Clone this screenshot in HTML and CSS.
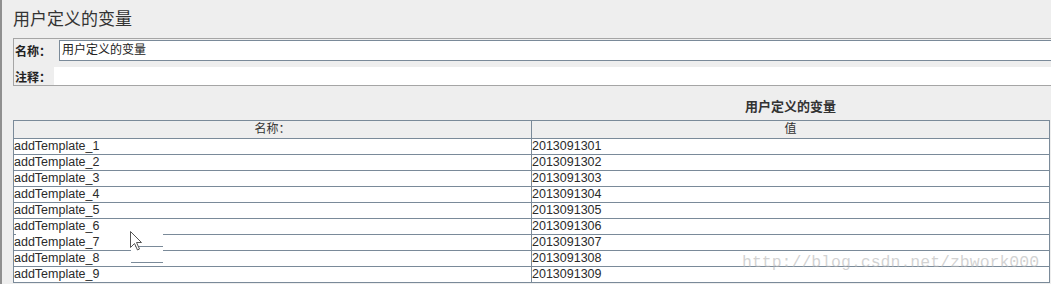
FILE: index.html
```html
<!DOCTYPE html>
<html lang="zh-CN">
<head>
    <meta charset="UTF-8">
    <title>用户定义的变量</title>
    <link rel="stylesheet" href="styles.css">
</head>
<body>
    <div class="page">
        <h1 class="title">用户定义的变量</h1>

        <div class="panel">
            <div class="field-row">
                <label class="label name-label">名称：</label>
                <div class="input">用户定义的变量</div>
            </div>
            <div class="field-row comment-row">
                <label class="label comment-label">注释：</label>
                <div class="comment"></div>
            </div>
        </div>

        <div class="table-title">用户定义的变量</div>

        <div class="vars">
            <div class="head">名称：</div>
            <div class="head">值</div>
            <div class="cell">addTemplate_1</div><div class="cell">2013091301</div>
            <div class="cell">addTemplate_2</div><div class="cell">2013091302</div>
            <div class="cell">addTemplate_3</div><div class="cell">2013091303</div>
            <div class="cell">addTemplate_4</div><div class="cell">2013091304</div>
            <div class="cell">addTemplate_5</div><div class="cell">2013091305</div>
            <div class="cell">addTemplate_6</div><div class="cell">2013091306</div>
            <div class="cell">addTemplate_7</div><div class="cell">2013091307</div>
            <div class="cell">addTemplate_8</div><div class="cell">2013091308</div>
            <div class="cell">addTemplate_9</div><div class="cell">2013091309</div>
        </div>

        <!-- screen capture leftovers around the mouse pointer -->
        <div class="gap-cover"></div>
        <div class="glitch">
            <span class="glitch-line first"></span>
            <span class="glitch-line second"></span>
        </div>
        <svg class="cursor" width="13" height="20" viewBox="0 0 13 20">
            <path d="M0.5 0.5 L0.5 16.5 L4.5 12.5 L7.5 19 L9.5 18 L6.5 11.5 L11.5 11.5 Z" fill="#fff" stroke="#555" stroke-width="1"/>
        </svg>

        <div class="watermark">http://blog.csdn.net/zbwork000</div>
    </div>
</body>
</html>
```

FILE: styles.css
```css
* {
    margin: 0;
    padding: 0;
    box-sizing: border-box;
}

body {
    background-color: #eeeeee;
    font-family: "Liberation Sans", "Noto Sans CJK SC", sans-serif;
    color: #333333;
    overflow: hidden;
    height: 284px;
}

.page {
    position: relative;
    border-left: 2px solid #8f8f8f;
    padding-left: 11px;
    height: 284px;
}

.title {
    font-size: 17px;
    font-weight: normal;
    line-height: 22px;
    padding-top: 9px;
    margin-bottom: 7px;
    color: #333333;
}

.panel {
    border: 1px solid #a5a5a5;
    border-right: none;
    margin-right: -20px;
    padding-top: 1px;
}

.field-row {
    display: flex;
    align-items: center;
}

.comment-row {
    margin-top: 6px;
}

.label {
    font-size: 12px;
    font-weight: bold;
    color: #222222;
    padding-left: 1px;
}

.name-label {
    width: 45px;
}

.comment-label {
    width: 40px;
}

.input {
    flex: 1;
    height: 21px;
    background-color: #ffffff;
    border: 1px solid #7a8a99;
    font-size: 12px;
    line-height: 19px;
    padding-left: 2px;
    color: #222222;
}

.comment {
    flex: 1;
    height: 18px;
    background-color: #ffffff;
}

.table-title {
    font-size: 13px;
    font-weight: bold;
    line-height: 18px;
    margin-top: 12px;
    margin-bottom: 4px;
    padding-left: 518px;
    width: 1037px;
    text-align: center;
    color: #333333;
}

.vars {
    display: grid;
    grid-template-columns: 517px 517px;
    grid-template-rows: 17px;
    grid-auto-rows: 15px;
    gap: 1px;
    width: 1037px;
    background-color: #7a8a99;
    border: 1px solid #7a8a99;
}

.vars .head {
    background-color: #eeeeee;
    font-size: 12px;
    line-height: 17px;
    text-align: center;
    color: #333333;
}

.vars .cell {
    background-color: #ffffff;
    font-size: 12.5px;
    line-height: 15px;
    white-space: nowrap;
    color: #2b2b2b;
}

.gap-cover {
    position: absolute;
    left: 14px;
    top: 234px;
    width: 147px;
    height: 1px;
    background-color: #ffffff;
}

.glitch {
    position: absolute;
    left: 129px;
    top: 235px;
    width: 32px;
    height: 16px;
    background-color: #ffffff;
}

.glitch-line {
    position: absolute;
    height: 1px;
    background-color: #7a8a99;
}

.glitch-line.first {
    left: 4px;
    right: 0;
    top: 11px;
}

.glitch-line.second {
    left: 0;
    right: 0;
    top: 27px;
}

.cursor {
    position: absolute;
    left: 128px;
    top: 231px;
}

.watermark {
    position: absolute;
    left: 740px;
    top: 253px;
    font-family: "Liberation Mono", monospace;
    font-size: 16.5px;
    line-height: 20px;
    color: rgba(180, 180, 180, 0.6);
    white-space: nowrap;
}
```
